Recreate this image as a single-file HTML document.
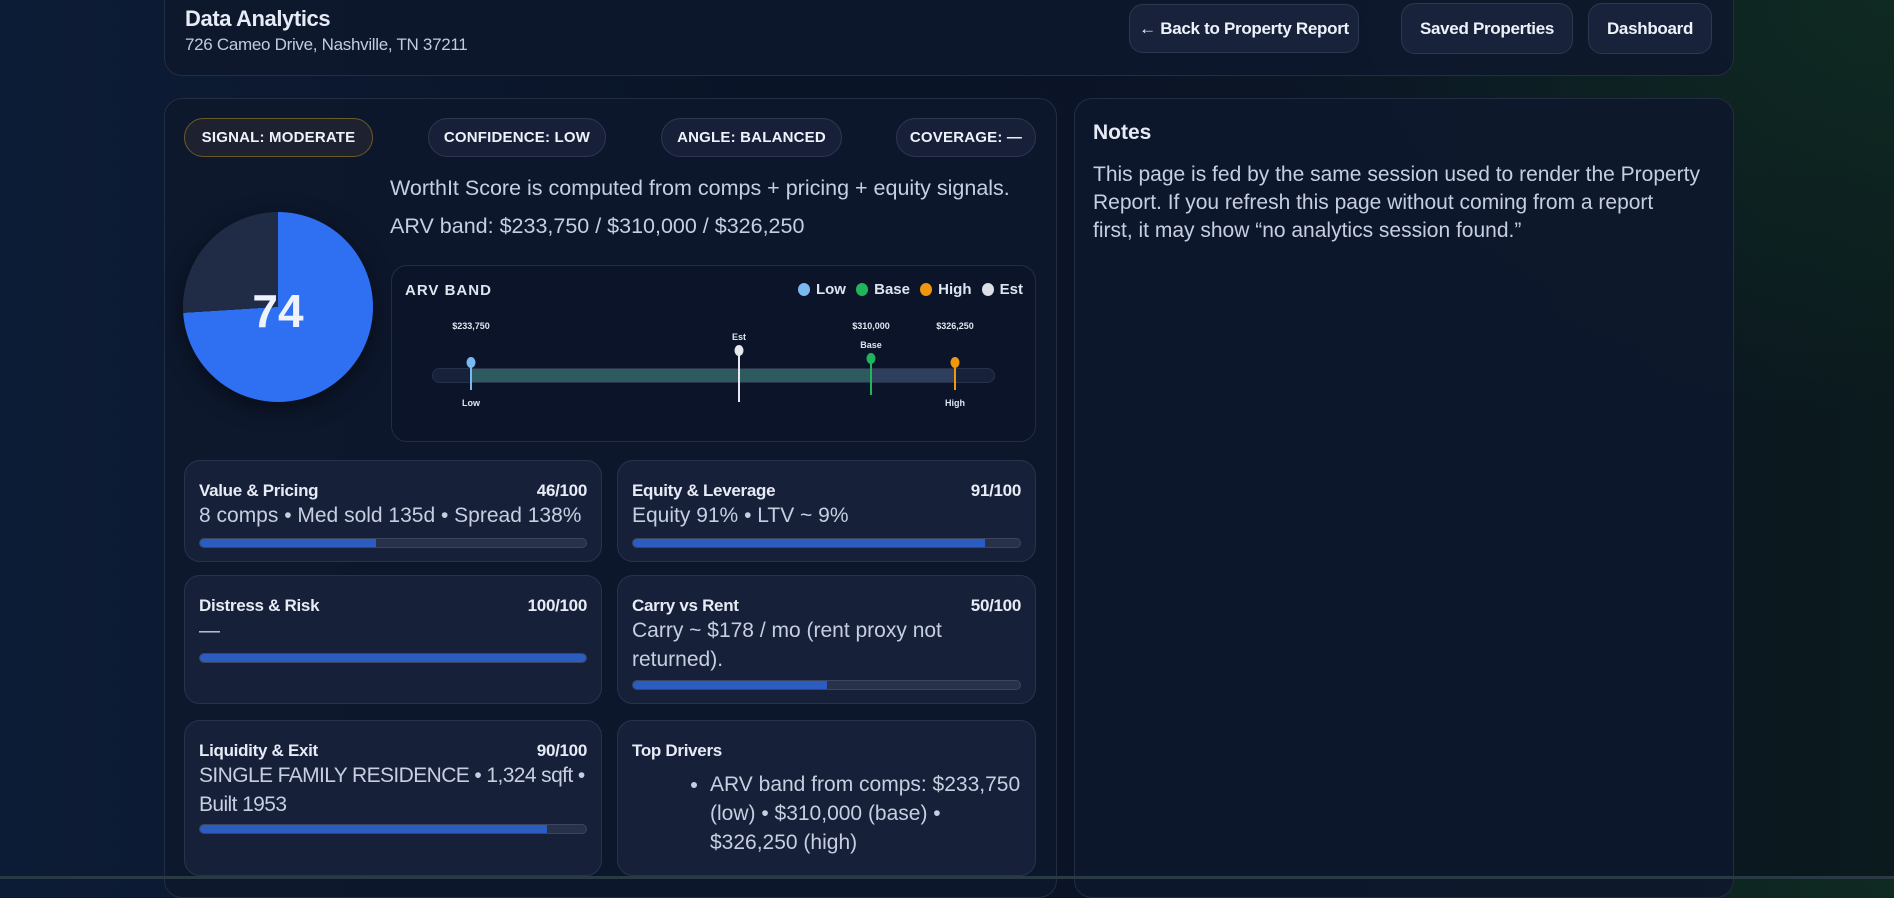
<!DOCTYPE html>
<html><head><meta charset="utf-8"><style>
*{box-sizing:border-box;margin:0;padding:0}
body{width:1894px;height:879px;overflow:hidden;font-family:"Liberation Sans",sans-serif;color:#e6ebf5;
background:radial-gradient(ellipse 900px 600px at 1894px 0px,#0f2a22 0%,rgba(15,42,34,0) 70%),linear-gradient(90deg,#0d1c36 0%,#0a1427 40%,#0b1526 75%,#0b1a1d 100%);position:relative}
.abs{position:absolute}
.panel{background:rgba(14,24,44,.92);border:1px solid #222d44;border-radius:18px}
.btn{position:absolute;top:4px;height:49px;border:1px solid #2c3850;background:#18223a;border-radius:14px;font-weight:700;font-size:17px;color:#eef2fa;display:flex;align-items:center;justify-content:center;letter-spacing:-.3px}
.pill{position:absolute;top:118px;height:39px;border:1px solid #2d3850;background:#172038;border-radius:20px;font-weight:900;font-size:15px;display:flex;align-items:center;justify-content:center;letter-spacing:.2px;color:#eef2fa}
.card{position:absolute;background:#172039;border:1px solid #28334b;border-radius:16px;padding:0 14px}
.ct{position:absolute;top:20px;left:14px;right:14px;font-weight:700;font-size:17px;display:flex;justify-content:space-between;letter-spacing:-.3px}
.cb{position:absolute;top:40px;left:14px;right:10px;font-size:21px;line-height:29px;color:#c6cee0}
.bar{position:absolute;left:14px;right:14px;height:10px;border-radius:6px;background:#27314a;border:1px solid #3a4560;overflow:hidden}
.bar i{display:block;height:100%;background:#2d5cc0}
.lbl{position:absolute;font-size:9px;font-weight:700;color:#dfe5f0;transform:translateX(-50%)}
.pin{position:absolute;width:2px}
.dot{position:absolute;width:9px;height:11px;border-radius:50%;transform:translateX(-50%)}
</style></head><body>
<div class="panel abs" style="left:164px;top:-20px;width:1570px;height:96px"></div>
<div class="abs" style="left:185px;top:6px;font-size:22px;font-weight:700;letter-spacing:-.4px">Data Analytics</div>
<div class="abs" style="left:185px;top:35px;font-size:17px;color:#c3cbdc;letter-spacing:-.3px">726 Cameo Drive, Nashville, TN 37211</div>
<div class="btn" style="left:1129px;width:230px">← Back to Property Report</div>
<div class="btn" style="left:1401px;width:172px;top:3px;height:51px">Saved Properties</div>
<div class="btn" style="left:1588px;width:124px;top:3px;height:51px">Dashboard</div>

<div class="panel abs" style="left:164px;top:98px;width:893px;height:800px"></div>
<div class="panel abs" style="left:1074px;top:98px;width:660px;height:800px"></div>
<div class="abs" style="left:1093px;top:121px;font-size:21px;font-weight:700">Notes</div>
<div class="abs" style="left:1093px;top:161px;width:625px;font-size:21px;line-height:28px;color:#c6cee0">This page is fed by the same session used to render the Property Report. If you refresh this page without coming from a report<br>first, it may show “no analytics session found.”</div>

<div class="pill" style="left:184px;width:189px;border-color:#6b5a22;background:#1d2130">SIGNAL: MODERATE</div>
<div class="pill" style="left:428px;width:178px">CONFIDENCE: LOW</div>
<div class="pill" style="left:661px;width:181px">ANGLE: BALANCED</div>
<div class="pill" style="left:896px;width:140px">COVERAGE: —</div>

<div class="abs" style="left:183px;top:212px;width:190px;height:190px;border-radius:50%;background:conic-gradient(#2f6ff2 0 74%,#202b45 74% 100%);box-shadow:0 6px 22px rgba(0,0,0,.5)"></div>
<div class="abs" style="left:183px;top:284px;width:190px;text-align:center;font-size:46px;font-weight:900;color:#eef2fb">74</div>

<div class="abs" style="left:390px;top:176px;font-size:21.5px;color:#c6cee0">WorthIt Score is computed from comps + pricing + equity signals.</div>
<div class="abs" style="left:390px;top:214px;font-size:21.5px;color:#c6cee0">ARV band: $233,750 / $310,000 / $326,250</div>

<div class="abs" style="left:391px;top:265px;width:645px;height:177px;background:#0b1428;border:1px solid #222d44;border-radius:16px"></div>
<div class="abs" style="left:405px;top:282px;font-size:15px;font-weight:900;letter-spacing:1px;color:#dfe5f0">ARV BAND</div>
<div class="abs" style="left:763px;top:281px;width:260px;justify-content:flex-end;font-size:15px;font-weight:700;color:#dfe5f0;display:flex;align-items:center;gap:6px">
<span style="width:12px;height:13px;border-radius:50%;background:#7ab8f0"></span>Low&nbsp;
<span style="width:12px;height:13px;border-radius:50%;background:#22b45a"></span>Base&nbsp;
<span style="width:12px;height:13px;border-radius:50%;background:#f0960f"></span>High&nbsp;
<span style="width:12px;height:13px;border-radius:50%;background:#dcdfe6"></span>Est</div>
<div class="abs" style="left:432px;top:368px;width:563px;height:15px;border-radius:8px;background:#18213a;border:1px solid #27314a"></div>
<div class="abs" style="left:471px;top:369px;width:400px;height:13px;background:#2c5a5e"></div>
<div class="abs" style="left:871px;top:369px;width:84px;height:13px;background:#2d3f5d"></div>
<div class="lbl" style="left:471px;top:321px">$233,750</div>
<div class="lbl" style="left:871px;top:321px">$310,000</div>
<div class="lbl" style="left:955px;top:321px">$326,250</div>
<div class="lbl" style="left:739px;top:332px">Est</div>
<div class="lbl" style="left:871px;top:340px">Base</div>
<div class="lbl" style="left:471px;top:398px">Low</div>
<div class="lbl" style="left:955px;top:398px">High</div>
<div class="pin" style="left:470px;top:362px;height:28px;background:#7ab8f0"></div><div class="dot" style="left:471px;top:357px;background:#7ab8f0"></div>
<div class="pin" style="left:738px;top:350px;height:52px;background:#e6e8ee"></div><div class="dot" style="left:739px;top:345px;background:#e6e8ee"></div>
<div class="pin" style="left:870px;top:360px;height:35px;background:#22b45a"></div><div class="dot" style="left:871px;top:353px;background:#22b45a"></div>
<div class="pin" style="left:954px;top:362px;height:28px;background:#f0960f"></div><div class="dot" style="left:955px;top:357px;background:#f0960f"></div>

<div class="card" style="left:184px;top:460px;width:418px;height:102px"><div class="ct"><span>Value &amp; Pricing</span><span>46/100</span></div><div class="cb" style="right:4px">8 comps • Med sold 135d • Spread 138%</div><div class="bar" style="top:77px"><i style="width:45.5%"></i></div></div>
<div class="card" style="left:617px;top:460px;width:419px;height:102px"><div class="ct"><span>Equity &amp; Leverage</span><span>91/100</span></div><div class="cb">Equity 91% • LTV ~ 9%</div><div class="bar" style="top:77px"><i style="width:91%"></i></div></div>
<div class="card" style="left:184px;top:575px;width:418px;height:129px"><div class="ct"><span>Distress &amp; Risk</span><span>100/100</span></div><div class="cb">—</div><div class="bar" style="top:77px"><i style="width:100%"></i></div></div>
<div class="card" style="left:617px;top:575px;width:419px;height:129px"><div class="ct"><span>Carry vs Rent</span><span>50/100</span></div><div class="cb" style="right:40px">Carry ~ $178 / mo (rent proxy not returned).</div><div class="bar" style="top:104px"><i style="width:50%"></i></div></div>
<div class="card" style="left:184px;top:720px;width:418px;height:156px"><div class="ct"><span>Liquidity &amp; Exit</span><span>90/100</span></div><div class="cb" style="right:0;letter-spacing:-.6px">SINGLE FAMILY RESIDENCE • 1,324 sqft • Built 1953</div><div class="bar" style="top:103px"><i style="width:90%"></i></div></div>
<div class="card" style="left:617px;top:720px;width:419px;height:156px"><div class="ct"><span>Top Drivers</span></div>
<ul class="cb" style="top:49px;left:92px;right:8px;list-style:disc"><li>ARV band from comps: $233,750 (low) • $310,000 (base) • $326,250 (high)</li></ul></div>
<div class="abs" style="left:0;top:876px;width:1894px;height:3px;background:#2a3a44"></div>
</body></html>
